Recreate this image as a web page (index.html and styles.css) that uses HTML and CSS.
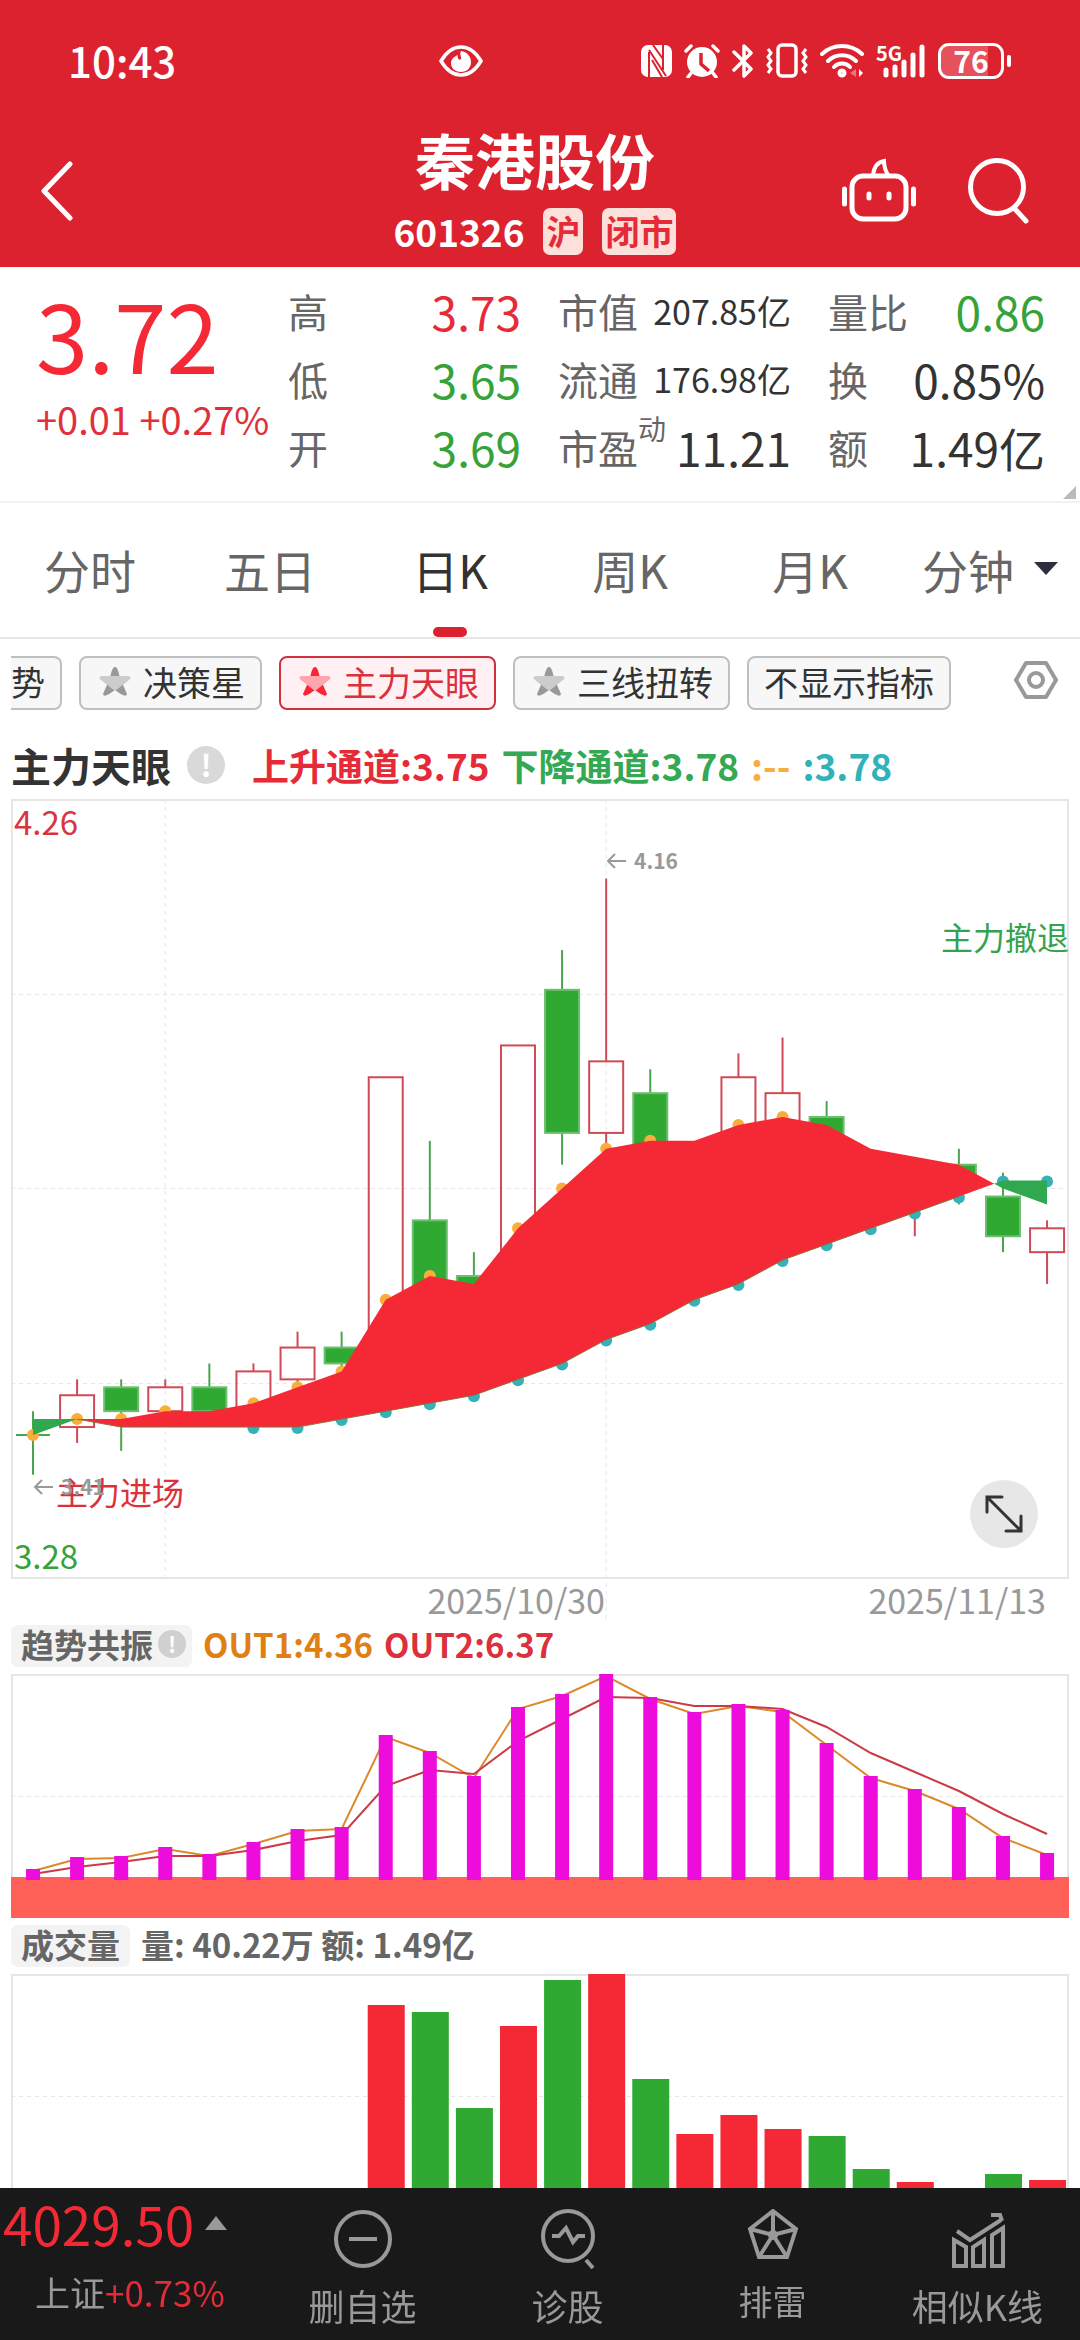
FILE: index.html
```html
<!DOCTYPE html>
<html lang="zh-CN">
<head>
    <meta charset="UTF-8">
    <meta name="viewport" content="width=device-width, initial-scale=1.0">
    <title>秦港股份 601326</title>
    <link rel="stylesheet" href="styles.css">
</head>
<body>
    <header class="header">
        <div class="status-bar">
            <span class="clock">10:43</span>
            <svg width="44" height="32" viewBox="0 0 44 32" fill="none">
                <path d="M2 16C8 6 15 2 22 2s14 4 20 14c-6 10-13 14-20 14S8 26 2 16z" stroke="#fff" stroke-width="3.5"/>
                <path d="M22 6c-2 4 1 6 0 8-2 2-4-1-3-4-5 2-7 5-7 8 0 5 4 9 10 9s10-4 10-10S28 7 22 6z" fill="#fff"/>
            </svg>
            <div class="status-icons">
                <svg width="31" height="32" viewBox="0 0 31 32">
                    <rect width="31" height="32" rx="7" fill="#fff"/>
                    <path d="M8 7v25M22 0v25M8 5l17 26M11 15l10 17M12 0l10 14" stroke="#dc222f" stroke-width="2" fill="none"/>
                </svg>
                <svg width="36" height="34" viewBox="0 0 36 34">
                    <circle cx="18" cy="18" r="15" fill="#fff"/>
                    <path d="M2 7l5-5M34 7l-5-5M8 28l-4 5M28 28l4 5" stroke="#fff" stroke-width="3.5" stroke-linecap="round"/>
                    <path d="M17 9v11l8 7" stroke="#dc222f" stroke-width="3.5" fill="none"/>
                </svg>
                <svg width="22" height="36" viewBox="0 0 22 36">
                    <path d="M2 9l17 17-7 7V3l7 7L2 27" stroke="#fff" stroke-width="3.5" fill="none" stroke-linejoin="round" stroke-linecap="round"/>
                </svg>
                <svg width="42" height="36" viewBox="0 0 42 36" fill="none" stroke="#fff" stroke-width="3.5">
                    <rect x="12" y="2" width="18" height="31" rx="4"/>
                    <path d="M2 6l3 4-3 4 3 4-3 4 3 4-3 4M40 6l-3 4 3 4-3 4 3 4-3 4 3 4" stroke-width="3"/>
                </svg>
                <svg width="44" height="36" viewBox="0 0 44 36" fill="none" stroke="#fff" stroke-width="4" stroke-linecap="round">
                    <path d="M2 11a29 29 0 0 1 40 0M8 18a20 20 0 0 1 28 0M14 24a11 11 0 0 1 16 0"/>
                    <circle cx="22" cy="30" r="2.500"/>
                    <path d="M39 26v8l4-4z" fill="#fff" stroke="none"/>
                    <path d="M36 26v8l-6-4z" fill="#f0747c" stroke="none"/>
                </svg>
                <svg class="signal" width="50" height="36" viewBox="0 0 50 36">
                    <text class="signal-label" x="0" y="18">5G</text>
                    <path d="M10 27v5M19 24v8M28 19v13M37 12v20M46 4v28" stroke="#fff" stroke-width="5" stroke-linecap="round"/>
                </svg>
                <div class="battery"><span class="battery-level">76</span></div>
            </div>
        </div>
        <div class="title-bar">
            <div class="title-side">
                <button class="icon-btn" aria-label="返回">
                    <svg width="32" height="60" viewBox="0 0 32 60"><path d="M29 3L3 30l26 27" fill="none" stroke="#fff" stroke-width="5" stroke-linecap="round" stroke-linejoin="round"/></svg>
                </button>
            </div>
            <div class="title-main">
                <h1>秦港股份</h1>
                <div class="stock-code">
                    <span>601326</span>
                    <span class="tag">沪</span>
                    <span class="tag">闭市</span>
                </div>
            </div>
            <div class="title-side title-actions">
                <button class="icon-btn" aria-label="助手">
                    <svg width="74" height="66" viewBox="0 0 74 66" fill="none" stroke="#fff" stroke-width="5" stroke-linecap="round">
                        <rect x="10" y="18" width="54" height="43" rx="11"/>
                        <path d="M31 17c1-8 5-13 11-14 0 5 1 9 4 14" stroke-width="4"/>
                        <path d="M27 36v4M47 36v4M2.500 31v15M71.500 31v15"/>
                    </svg>
                </button>
                <button class="icon-btn" aria-label="搜索">
                    <svg width="62" height="66" viewBox="0 0 62 66" fill="none" stroke="#fff" stroke-width="5" stroke-linecap="round">
                        <circle cx="30" cy="29" r="26.500"/>
                        <path d="M47 50l12 13"/>
                    </svg>
                </button>
            </div>
        </div>
    </header>

    <section class="quote">
        <div class="quote-main">
            <div class="price">3.72</div>
            <div class="change">+0.01 +0.27%</div>
        </div>
        <div class="stats">
            <div class="stat"><span class="stat-label">高</span><span class="up">3.73</span></div>
            <div class="stat"><span class="stat-label">市值</span><span class="small">207.85亿</span></div>
            <div class="stat"><span class="stat-label">量比</span><span class="down">0.86</span></div>
            <div class="stat"><span class="stat-label">低</span><span class="down">3.65</span></div>
            <div class="stat"><span class="stat-label">流通</span><span class="small">176.98亿</span></div>
            <div class="stat"><span class="stat-label">换</span><span>0.85%</span></div>
            <div class="stat"><span class="stat-label">开</span><span class="down">3.69</span></div>
            <div class="stat"><span class="stat-label">市盈<sup>动</sup></span><span>11.21</span></div>
            <div class="stat"><span class="stat-label">额</span><span>1.49亿</span></div>
        </div>
    </section>

    <nav class="tabs">
        <button class="tab">分时</button>
        <button class="tab">五日</button>
        <button class="tab active">日K</button>
        <button class="tab">周K</button>
        <button class="tab">月K</button>
        <button class="tab">分钟<span class="caret"></span></button>
    </nav>

    <div class="chip-row">
        <div class="chips">
            <button class="chip cut">势</button>
            <button class="chip"><svg class="star" viewBox="0 0 32 30"><path class="star-back" d="M16 0c3 0 4 7 5 11l7 16c-1 3-4 2-12-4-8 6-11 7-12 4l7-16c1-4 2-11 5-11z"/><path class="star-front" d="M2 9h28c2 1 2 2 0 4L16 24 2 13c-2-2-2-3 0-4z"/></svg>决策星</button>
            <button class="chip active"><svg class="star" viewBox="0 0 32 30"><path class="star-back" d="M16 0c3 0 4 7 5 11l7 16c-1 3-4 2-12-4-8 6-11 7-12 4l7-16c1-4 2-11 5-11z"/><path class="star-front" d="M2 9h28c2 1 2 2 0 4L16 24 2 13c-2-2-2-3 0-4z"/></svg>主力天眼</button>
            <button class="chip"><svg class="star" viewBox="0 0 32 30"><path class="star-back" d="M16 0c3 0 4 7 5 11l7 16c-1 3-4 2-12-4-8 6-11 7-12 4l7-16c1-4 2-11 5-11z"/><path class="star-front" d="M2 9h28c2 1 2 2 0 4L16 24 2 13c-2-2-2-3 0-4z"/></svg>三线扭转</button>
            <button class="chip">不显示指标</button>
        </div>
        <button class="icon-btn" aria-label="指标设置">
            <svg width="46" height="40" viewBox="0 0 46 40" fill="none" stroke="#999" stroke-width="4" stroke-linejoin="round">
                <path d="M13 3h20l10 17-10 17H13L3 20z"/>
                <circle cx="23" cy="20" r="7"/>
            </svg>
        </button>
    </div>

    <div class="indicator-title">
        <h2>主力天眼</h2>
        <span class="info">!</span>
        <div class="legend">
            <span class="up">上升通道:3.75</span>
            <span class="fall">下降通道:3.78</span>
            <span class="orange">:--</span>
            <span class="teal">:3.78</span>
        </div>
    </div>

    <main class="charts">
        <div class="main-chart">
            <svg id="kline" viewBox="0 0 1058 826"></svg>
            <button class="expand" aria-label="全屏">
                <svg width="40" height="40" viewBox="0 0 40 40" fill="none" stroke="#333" stroke-width="3" stroke-linecap="round">
                    <path d="M3 3l34 34M3 18V3h15M37 22v15H22"/>
                </svg>
            </button>
        </div>

        <div class="sub-title">
            <span class="badge with-info">趋势共振<span class="info">!</span></span>
            <span class="out1">OUT1:4.36</span>
            <span class="out2">OUT2:6.37</span>
        </div>
        <svg id="resonance" viewBox="0 0 1058 244"></svg>

        <div class="sub-title">
            <span class="badge">成交量</span>
            <span class="volume-text">量: 40.22万 额: 1.49亿</span>
        </div>
        <svg id="volume" viewBox="0 0 1058 244"></svg>
    </main>

    <footer class="bottom-bar">
        <a class="index" href="#">
            <span class="index-value">4029.50<span class="index-arrow"></span></span>
            <span class="index-change">上证<span class="up">+0.73%</span></span>
        </a>
        <button class="action">
            <svg width="60" height="60" viewBox="0 0 60 60"><circle cx="30" cy="30" r="27"/><path d="M16 30h28"/></svg>
            删自选
        </button>
        <button class="action">
            <svg width="60" height="60" viewBox="0 0 60 60"><circle cx="30" cy="27" r="25"/><path d="M14 27h7l7-8 7 14 5-6h7M48 51l7 8"/></svg>
            诊股
        </button>
        <button class="action compact">
            <svg width="60" height="60" viewBox="0 0 60 60"><path d="M30 2l23 18-9 28H16L7 20zM30 2v24M7 20l23 6 23-6M16 48l14-22 14 22"/><circle cx="30" cy="26" r="3"/></svg>
            排雷
        </button>
        <button class="action">
            <svg width="60" height="60" viewBox="0 0 60 60"><path d="M6 57V31l12 7v19zM25 57V38l11-7v26zM44 57V26l11-7v38zM9 22l13 9 31-20M43 6h9l2 6"/></svg>
            相似K线
        </button>
    </footer>

    <script src="script.js"></script>
</body>
</html>
```

FILE: styles.css
```css
* {
    box-sizing: border-box;
}

body {
    margin: 0;
    padding-bottom: 120px;
    background: #fff;
    color: #333;
    font-family: "Noto Sans CJK SC", "Noto Sans", sans-serif;
}

svg {
    display: block;
    flex-shrink: 0;
}

button {
    margin: 0;
    padding: 0;
    border: none;
    background: none;
    color: inherit;
    font: inherit;
    cursor: pointer;
}

.up {
    color: #e62b38;
}

.down {
    color: #35a23a;
}

.fall {
    color: #34a853;
}

.orange {
    color: #f9ae3c;
}

.teal {
    color: #30b2ba;
}

/* Header */
.header {
    background: #dc222f;
    color: #fff;
}

.status-bar {
    display: grid;
    grid-template-columns: 371px 44px 1fr;
    align-items: center;
    height: 122px;
    padding: 0 70px 0 68px;
}

.clock {
    padding-bottom: 2px;
    font-size: 42px;
    font-weight: 500;
    line-height: 48px;
}

.status-icons {
    display: flex;
    align-items: center;
    justify-content: flex-end;
    gap: 12px;
}

.signal {
    overflow: visible;
}

.signal-label {
    fill: #fff;
    font-size: 20px;
    font-weight: 700;
}

.battery {
    position: relative;
    width: 66px;
    height: 36px;
    margin-right: 6px;
    border: 3px solid #fff;
    border-radius: 11px;
    background: linear-gradient(90deg, #e5525c 78%, transparent 78%);
    text-align: center;
}

.battery::after {
    content: "";
    position: absolute;
    top: 9px;
    right: -10px;
    width: 4px;
    height: 12px;
    border-radius: 2px;
    background: #fff;
}

.battery-level {
    display: block;
    font-size: 30px;
    font-weight: 700;
    line-height: 28px;
}

.title-bar {
    display: flex;
    justify-content: space-between;
    height: 145px;
    padding: 0 51px 0 41px;
}

.title-side {
    display: flex;
    align-items: center;
    width: 240px;
    padding-bottom: 8px;
}

.title-actions {
    justify-content: flex-end;
    gap: 51px;
}

.title-main {
    text-align: center;
}

h1 {
    margin: 0;
    font-size: 60px;
    font-weight: 700;
    line-height: 74px;
}

.stock-code {
    display: flex;
    align-items: center;
    justify-content: center;
    gap: 19px;
    margin-top: 12px;
    font-size: 37px;
    font-weight: 700;
    line-height: 45px;
}

.tag {
    padding: 0 3px 2px;
    border-radius: 7px;
    background: #fee0da;
    color: #e62b38;
    font-size: 34px;
}

/* Quote */
.quote {
    position: relative;
    display: flex;
    height: 236px;
    padding: 10px 35px 0 36px;
    border-bottom: 2px solid #f2f2f2;
}

.quote::after {
    content: "";
    position: absolute;
    right: 4px;
    bottom: 2px;
    border-left: 13px solid transparent;
    border-bottom: 13px solid #bbb;
}

.quote-main {
    width: 252px;
    white-space: nowrap;
}

.price {
    color: #f52936;
    font-size: 94px;
    line-height: 112px;
}

.change {
    margin-top: 2px;
    color: #df303b;
    font-size: 38px;
    line-height: 56px;
}

.stats {
    display: grid;
    flex: 1;
    grid-template-columns: 233fr 233fr 217fr;
    grid-auto-rows: 68px;
    column-gap: 37px;
}

.stat {
    display: flex;
    align-items: center;
    justify-content: space-between;
    font-size: 46px;
    line-height: 68px;
    white-space: nowrap;
}

.stat-label {
    color: #666;
    font-size: 40px;
}

.stat .small {
    font-size: 34px;
}

.stat sup {
    font-size: 28px;
    line-height: 0;
    vertical-align: 24px;
}

/* Period tabs */
.tabs {
    display: grid;
    grid-template-columns: repeat(6, 1fr);
    height: 136px;
    border-bottom: 2px solid #e6e6e6;
}

.tab {
    position: relative;
    display: flex;
    align-items: center;
    justify-content: center;
    padding-bottom: 3px;
    color: #666;
    font-size: 46px;
}

.tab.active {
    color: #333;
}

.tab.active::after {
    content: "";
    position: absolute;
    bottom: 0;
    left: 50%;
    width: 34px;
    height: 10px;
    margin-left: -17px;
    border-radius: 5px;
    background: #dc222f;
}

.caret {
    margin-left: 20px;
    border: 12px solid transparent;
    border-top: 13px solid #2b2f3f;
    border-bottom: none;
}

/* Indicator chips */
.chip-row {
    display: flex;
    align-items: flex-start;
    justify-content: space-between;
    padding: 17px 21px 0 11px;
}

.chip-row .icon-btn {
    padding-top: 4px;
}

.chips {
    display: flex;
    gap: 17px;
    overflow: hidden;
}

.chip {
    display: flex;
    align-items: center;
    height: 54px;
    padding: 0 15px 3px;
    border: 2px solid #bfbfbf;
    border-radius: 8px;
    background: #f7f7f7;
    font-size: 34px;
    white-space: nowrap;
}

.chip.cut {
    padding-left: 0;
    border-left: none;
    border-radius: 0 8px 8px 0;
}

.chip.active {
    border-color: #cf323e;
    background: #fff1f3;
    color: #dc303c;
}

.star {
    width: 32px;
    height: 30px;
    margin: 0 12px 0 3px;
}

.star-back {
    fill: #999;
}

.star-front {
    fill: #ccc;
}

.chip.active .star-back {
    fill: #f52936;
}

.chip.active .star-front {
    fill: #ffa5ab;
}

/* Indicator title */
.indicator-title {
    display: flex;
    align-items: center;
    height: 89px;
    padding: 20px 11px 0;
}

h2 {
    margin: 0;
    font-size: 40px;
    font-weight: 700;
}

.info {
    width: 38px;
    height: 38px;
    border-radius: 50%;
    background: #d9d9d9;
    color: #fff;
    font-size: 30px;
    font-weight: 700;
    line-height: 36px;
    text-align: center;
}

.indicator-title .info {
    margin: 0 27px 0 16px;
}

.legend {
    display: flex;
    gap: 12px;
    font-size: 37px;
    font-weight: 700;
    white-space: nowrap;
}

/* Charts */
.charts {
    padding: 0 11px;
}

.charts > svg,
.main-chart > svg {
    width: 100%;
}

.main-chart {
    position: relative;
}

.expand {
    position: absolute;
    right: 31px;
    bottom: 77px;
    display: flex;
    align-items: center;
    justify-content: center;
    width: 68px;
    height: 68px;
    border-radius: 50%;
    background: #e7e7e7;
}

.sub-title {
    display: flex;
    align-items: center;
    gap: 11px;
    height: 42px;
    margin-bottom: 7px;
    color: #666;
    font-size: 33px;
    font-weight: 700;
    line-height: 38px;
    white-space: nowrap;
}

#resonance {
    margin-bottom: 7px;
}

.out1,
.out2,
.volume-text,
.badge {
    padding-bottom: 4px;
}

.badge {
    display: flex;
    align-items: center;
    gap: 5px;
    padding-right: 10px;
    padding-left: 10px;
    border-radius: 7px;
    background: #f3f3f3;
}

.badge.with-info {
    padding-right: 6px;
}

.badge .info {
    width: 28px;
    height: 28px;
    background: #d0d0d0;
    font-size: 22px;
    line-height: 26px;
}

.out1 {
    color: #e07f13;
}

.out2 {
    color: #dc303c;
}

.frame {
    fill: none;
    stroke: #e6e6e6;
    stroke-width: 2;
}

.grid-line {
    stroke: #e6e6e6;
    stroke-width: 1;
    stroke-dasharray: 4 4;
}

.candle-up {
    fill: none;
    stroke: #cf4a55;
    stroke-width: 2;
}

.candle-down {
    fill: #30a932;
    stroke: #6cbf6e;
    stroke-width: 2;
}

.wick-up {
    stroke: #cf4a55;
    stroke-width: 2;
}

.wick-down {
    stroke: #4aa64d;
    stroke-width: 2;
}

.dot-high {
    fill: #f9ae3c;
}

.dot-low {
    fill: #36b1b8;
}

.band-up {
    fill: #f52936;
}

.band-down {
    fill: #30a84f;
}

.band-edge {
    fill: none;
    stroke: #8a7040;
    stroke-width: 1;
}

.axis-high,
.axis-low {
    font-size: 33px;
}

.date {
    font-size: 34px;
}

.axis-high {
    fill: #d9353f;
}

.axis-low {
    fill: #35a23a;
}

.date {
    fill: #999;
    text-anchor: end;
}

.extreme {
    fill: #999;
    font-size: 21px;
    font-weight: 700;
}

.extreme-arrow {
    fill: none;
    stroke: #999;
    stroke-width: 2;
}

.signal-in,
.signal-out {
    font-size: 32px;
}

.signal-in {
    fill: #dc303c;
}

.signal-out {
    fill: #34a24e;
    text-anchor: end;
}

.zone {
    fill: #ff6057;
}

.resonance-bar {
    fill: #ee0cdc;
}

.line-out1,
.line-out2 {
    fill: none;
    stroke-width: 2;
}

.line-out1 {
    stroke: #db8a2b;
}

.line-out2 {
    stroke: #cb3a46;
}

.volume-up {
    fill: #f52936;
}

.volume-down {
    fill: #30a932;
}

/* Bottom bar */
.bottom-bar {
    position: fixed;
    right: 0;
    bottom: 0;
    left: 0;
    display: grid;
    grid-template-columns: 260px repeat(4, 1fr);
    height: 152px;
    background: #191919;
    color: #999;
}

.index {
    display: flex;
    flex-direction: column;
    padding-left: 3px;
    color: inherit;
    text-decoration: none;
    white-space: nowrap;
}

.index-value {
    display: flex;
    align-items: center;
    gap: 11px;
    height: 70px;
    color: #f52936;
    font-size: 53px;
}

.index-arrow {
    border: 11px solid transparent;
    border-top: none;
    border-bottom: 14px solid #999;
}

.index-change {
    height: 68px;
    padding-left: 32px;
    font-size: 35px;
    line-height: 68px;
}

.action {
    display: flex;
    flex-direction: column;
    align-items: center;
    gap: 10px;
    padding-top: 21px;
    font-size: 36px;
    line-height: 52px;
    white-space: nowrap;
}

.action.compact {
    gap: 6px;
    font-size: 34px;
}

.action svg {
    fill: none;
    stroke: #999;
    stroke-width: 4;
}
```

FILE: script.js
```js
const STEP = 44.09;
const FIRST = 22;
const WIDTH = 1058;

// top, bottom, high, low, direction (null = nothing but the channel is visible)
const candles = [
    [3.46, 3.46, 3.49, 3.41, 'down'],
    [3.51, 3.47, 3.53, 3.45, 'up'],
    [3.52, 3.49, 3.53, 3.44, 'down'],
    [3.52, 3.49, 3.53, 3.49, 'up'],
    [3.52, 3.49, 3.55, 3.49, 'down'],
    [3.54, 3.49, 3.55, 3.49, 'up'],
    [3.57, 3.53, 3.59, 3.52, 'up'],
    [3.57, 3.55, 3.59, 3.54, 'down'],
    [3.91, 3.52, 3.91, 3.52, 'up'],
    [3.73, 3.64, 3.83, 3.62, 'down'],
    [3.66, 3.62, 3.69, 3.60, 'down'],
    [3.95, 3.63, 3.95, 3.63, 'up'],
    [4.02, 3.84, 4.07, 3.80, 'down'],
    [3.93, 3.84, 4.16, 3.80, 'up'],
    [3.89, 3.80, 3.92, 3.78, 'down'],
    null,
    [3.91, 3.82, 3.94, 3.80, 'up'],
    [3.89, 3.82, 3.96, 3.80, 'up'],
    [3.86, 3.80, 3.88, 3.78, 'down'],
    null,
    [3.78, 3.76, 3.79, 3.71, 'up'],
    [3.80, 3.78, 3.82, 3.75, 'down'],
    [3.76, 3.71, 3.79, 3.69, 'down'],
    [3.72, 3.69, 3.73, 3.65, 'up']
];
const upper = [3.46, 3.48, 3.48, 3.49, 3.49, 3.50, 3.52, 3.54, 3.63, 3.66, 3.65, 3.72, 3.77, 3.82, 3.83, 3.83, 3.85, 3.86, 3.85, 3.82, 3.81, 3.80, 3.77, 3.75];
const lower = [3.48, 3.48, 3.47, 3.47, 3.47, 3.47, 3.47, 3.48, 3.49, 3.50, 3.51, 3.53, 3.55, 3.58, 3.60, 3.63, 3.65, 3.68, 3.70, 3.72, 3.74, 3.76, 3.78, 3.78];
const highDots = [0, 1, 2, 3, 5, 6, 7, 8, 9, 11, 12, 13, 14, 16, 17];
const lowDots = [5, 6, 7, 8, 9, 10, 11, 12, 13, 14, 15, 16, 17, 18, 19, 20, 21, 22, 23];

const out1 = [11, 23, 24, 33, 26, 38, 51, 53, 145, 129, 104, 173, 186, 206, 183, 168, 176, 170, 137, 104, 91, 73, 44, 27];
const out2 = [6, 13, 18, 24, 24, 30, 39, 45, 94, 110, 106, 139, 161, 183, 182, 174, 174, 171, 153, 127, 108, 89, 66, 46];

const volumes = [
    null, null, null, null, null, null, null, null,
    [213, 'up'], [206, 'down'], [110, 'down'], [192, 'up'], [238, 'down'], [244, 'up'],
    [139, 'down'], [84, 'up'], [103, 'up'], [89, 'up'], [82, 'down'], [49, 'down'],
    [36, 'up'], [20, 'down'], [44, 'down'], [38, 'up']
];

const x = i => FIRST + i * STEP;
const y = price => (4.26 - price) * 795;
const line = (cls, x1, y1, x2, y2) => `<line class="${cls}" x1="${x1}" y1="${y1}" x2="${x2}" y2="${y2}"/>`;
const rect = (cls, left, top, w, h) => `<rect class="${cls}" x="${left}" y="${top}" width="${w}" height="${h}"/>`;
const text = (cls, left, top, value) => `<text class="${cls}" x="${left}" y="${top}">${value}</text>`;
const points = list => list.map(p => p.join(',')).join(' ');

// area between upper and lower from bar a to bar b, b may end on a crossing point
function band(cls, from, to, before, after) {
    const top = [];
    const bottom = [];
    for (let i = from; i <= to; i++) {
        top.push([x(i), y(upper[i])]);
        bottom.unshift([x(i), y(lower[i])]);
    }
    const list = [...before, ...top, ...after, ...bottom];
    return `<polygon class="${cls}" points="${points(list)}"/>`;
}

function drawKline() {
    let out = rect('frame', 1, 1, WIDTH - 2, 778);
    [195, 389, 584].forEach(top => out += line('grid-line', 0, top + 0.5, WIDTH, top + 0.5));
    [[3, 779], [13, 820]].forEach(([i, end]) => out += line('grid-line', x(i), 0, x(i), end));

    candles.forEach((candle, i) => {
        if (!candle) return;
        const [top, bottom, high, low, dir] = candle;
        out += line(`wick-${dir}`, x(i), y(high), x(i), y(top));
        out += line(`wick-${dir}`, x(i), y(bottom), x(i), y(low));
        if (top === bottom) {
            out += line(`wick-${dir}`, x(i) - 17, y(top), x(i) + 17, y(top));
        } else {
            out += rect(`candle-${dir}`, x(i) - 17, y(top), 34, y(bottom) - y(top));
        }
    });

    highDots.forEach(i => out += `<circle class="dot-high" cx="${x(i)}" cy="${y(upper[i])}" r="6"/>`);
    lowDots.forEach(i => out += `<circle class="dot-low" cx="${x(i)}" cy="${y(lower[i]) + 1}" r="6"/>`);

    // the lines meet at bar 1 and cross between bars 21 and 22
    const cross = [[x(21.8), y(3.776)]];
    out += band('band-down', 0, 1, [], []);
    out += band('band-up', 1, 21, [], cross);
    out += band('band-down', 22, 23, cross, []);
    out += `<polyline class="band-edge" points="${points(lower.slice(1, 22).map((p, i) => [x(i + 1), y(p)]))}"/>`;

    out += text('axis-high', 3, 36, '4.26') + text('axis-low', 3, 770, '3.28');
    out += `<path class="extreme-arrow" d="M615 62h-18m7-7l-7 7 7 7"/>` + text('extreme', 623, 70, '4.16');
    out += text('signal-in', 45, 706, '主力进场');
    out += `<path class="extreme-arrow" d="M42 688h-18m7-7l-7 7 7 7"/>` + text('extreme', 50, 696, '3.41');
    out += text('signal-out', WIDTH, 151, '主力撤退');
    out += text('date', 594, 815, '2025/10/30') + text('date', 1035, 815, '2025/11/13');
    document.getElementById('kline').innerHTML = out;
}

function drawResonance() {
    const base = 206;
    let out = rect('frame', 1, 1, WIDTH - 2, 242);
    out += line('grid-line', 0, 122.5, WIDTH, 122.5);
    out += rect('zone', 0, 203, WIDTH, 41);
    out += `<polyline class="line-out1" points="${points(out1.map((v, i) => [x(i), base + 2 - v]))}"/>`;
    out += `<polyline class="line-out2" points="${points(out2.map((v, i) => [x(i), base - v]))}"/>`;
    out1.forEach((v, i) => out += rect('resonance-bar', x(i) - 7, base - v, 14, v));
    document.getElementById('resonance').innerHTML = out;
}

function drawVolume() {
    let out = rect('frame', 1, 1, WIDTH - 2, 242);
    out += line('grid-line', 0, 122.5, WIDTH, 122.5);
    volumes.forEach((volume, i) => {
        if (!volume) return;
        out += rect(`volume-${volume[1]}`, x(i) - 18, 244 - volume[0], 37, volume[0]);
    });
    document.getElementById('volume').innerHTML = out;
}

drawKline();
drawResonance();
drawVolume();
```
